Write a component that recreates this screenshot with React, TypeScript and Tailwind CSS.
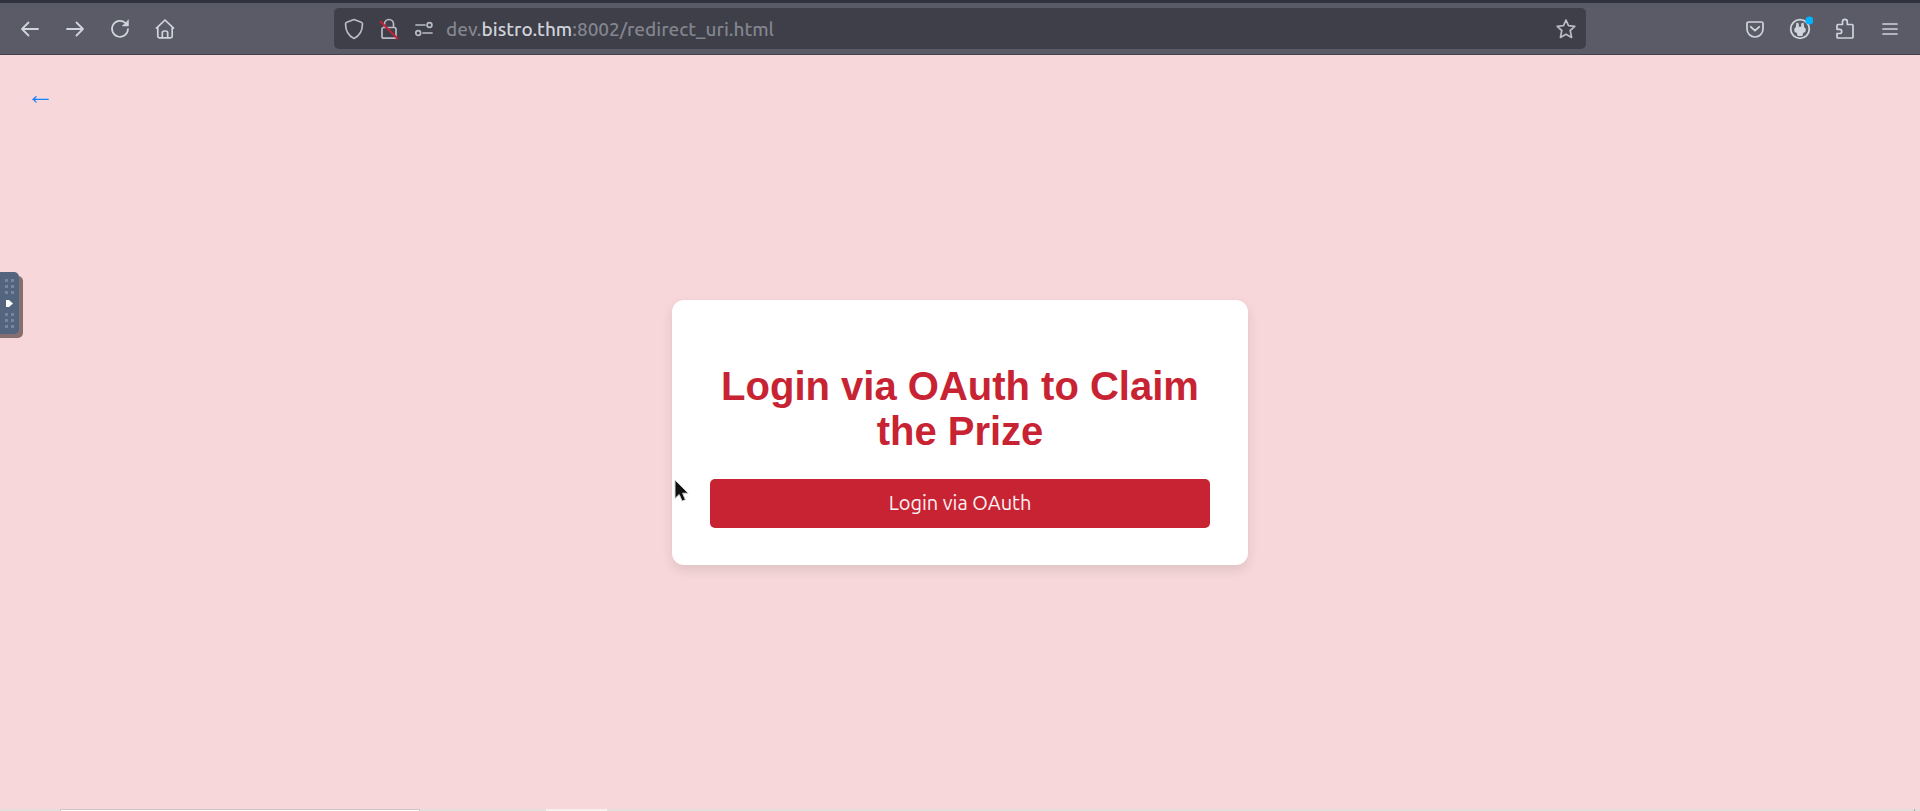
import React from "react";

const stroke = {
  fill: "none",
  stroke: "currentColor",
  strokeLinecap: "round" as const,
  strokeLinejoin: "round" as const,
};

function IconButton({ label, children }: { label: string; children: React.ReactNode }) {
  return (
    <button aria-label={label} className="flex size-7 items-center justify-center text-[#d0d4dc]">
      {children}
    </button>
  );
}

function Toolbar() {
  return (
    <header className="flex h-[55px] shrink-0 items-stretch border-t-[3px] border-b border-t-[#31323f] border-b-[#42434f] bg-[#5a5b66]">
      <nav className="flex flex-1 items-center gap-[17px] pl-4">
        <IconButton label="Back">
          <svg width="20" height="20" viewBox="0 0 20 20" {...stroke} strokeWidth="1.8">
            <path d="M18 10H2M8.500 3.500 2 10l6.500 6.500" />
          </svg>
        </IconButton>
        <IconButton label="Forward">
          <svg width="20" height="20" viewBox="0 0 20 20" {...stroke} strokeWidth="1.8">
            <path d="M2 10h16M11.500 3.500 18 10l-6.500 6.500" />
          </svg>
        </IconButton>
        <IconButton label="Reload">
          <svg width="20" height="20" viewBox="0 0 20 20" {...stroke} strokeWidth="1.7">
            <path d="M18 10A8 8 0 1 1 15.500 4" />
            <path d="M18.500 1v6h-6z" fill="currentColor" strokeWidth=".5" />
          </svg>
        </IconButton>
        <IconButton label="Home">
          <svg width="20" height="20" viewBox="0 0 20 20" {...stroke} strokeWidth="1.7">
            <path d="M1.500 9.200 10 1l8.500 8.200M2.800 8.500v8.700c0 1 .6 1.600 1.600 1.600h11.200c1 0 1.600-.6 1.600-1.600V8.500" />
            <path d="M7.300 18.500V14c0-1.200.8-2 2-2h1.400c1.200 0 2 .8 2 2v4.500" />
          </svg>
        </IconButton>
      </nav>

      <div className="my-[5px] flex w-[1252px] min-w-0 items-center rounded-[5px] bg-[#3e3f48] pr-[10px] pl-[10px] text-[#b9bcc6]">
        <svg className="shrink-0" width="20" height="22" viewBox="0 0 20 22" {...stroke} strokeWidth="1.700">
          <path d="M10 1.500 2.800 4.200c-1 .4-1.300.8-1.300 1.600C1.600 12 4.500 18 10 20.500 15.500 18 18.400 12 18.500 5.800c0-.8-.3-1.200-1.300-1.600z" />
        </svg>
        <svg className="ml-[15px] shrink-0" width="20" height="22" viewBox="0 0 20 22" {...stroke} strokeWidth="1.700">
          <path d="M5.500 9V6a4.500 4.500 0 0 1 9 0v3" />
          <rect x="3" y="9.500" width="14" height="10.700" rx="1.800" />
          <path d="M1.500 3.500 18.500 20.500" stroke="#c5213c" strokeWidth="2" />
        </svg>
        <svg className="ml-[15px] shrink-0" width="20" height="16" viewBox="0 0 20 16" {...stroke} strokeWidth="1.700">
          <path d="M2 4h9M9 12h9" />
          <circle cx="15.500" cy="4" r="2.400" />
          <circle cx="4.200" cy="12" r="2.400" />
        </svg>
        <div
          role="textbox"
          aria-label="Address"
          contentEditable
          suppressContentEditableWarning
          spellCheck={false}
          className="ml-3 min-w-0 flex-1 font-['Ubuntu','Noto_Sans',sans-serif] text-[19px] leading-7 font-medium whitespace-nowrap text-[#83858f]"
        >
          dev.<span className="text-[#d0d3db]">bistro.thm</span>:8002/redirect_uri.html
        </div>
        <button aria-label="Bookmark" className="shrink-0">
          <svg width="20" height="20" viewBox="0 0 20 20" {...stroke} strokeWidth="1.700">
            <path d="m10 1 2.500 5.600 6.300.7-4.600 4.200 1.400 6.900L10 15.200l-5.600 3.200 1.400-6.900-4.600-4.200 6.300-.7z" />
          </svg>
        </button>
      </div>

      <nav className="flex flex-1 items-center justify-end gap-[17px] pr-4">
        <IconButton label="Pocket">
          <svg width="18" height="18" viewBox="0 0 18 18" {...stroke} strokeWidth="1.700">
            <path d="M2.500 2h13c.8 0 1.500.7 1.500 1.500V9A8 8 0 0 1 1 9V3.500C1 2.700 1.700 2 2.500 2z" />
            <path d="m4.800 6.800 4.200 3.900 4.200-3.900" strokeWidth="1.800" />
          </svg>
        </IconButton>
        <IconButton label="Proxy switcher">
          <svg width="26" height="26" viewBox="0 0 26 26">
            <circle cx="13" cy="13" r="9.300" fill="none" stroke="currentColor" strokeWidth="1.800" />
            <path d="M9.400 6.600 11.800 7.600v3.200h2.400V7.600l2.400-1 .6 4.600 1.600 1.600-.3 3-2.500 1.400-.5 2.800h-5l-.5-2.800-2.500-1.400-.3-3 1.600-1.600z" fill="currentColor" />
            <circle cx="22.500" cy="4.500" r="4" fill="#00b3ff" />
          </svg>
        </IconButton>
        <IconButton label="Extensions">
          <svg width="20" height="22" viewBox="0 0 20 22" {...stroke} strokeWidth="1.700">
            <path d="M3 6.500h4.500V3.800a2.400 2.400 0 0 1 4.800 0v2.700h4.700c.6 0 1 .4 1 1V19c0 .6-.4 1-1 1H3c-.6 0-1-.4-1-1v-3.500h2.600a2.100 2.100 0 0 0 0-4.200H2V7.500c0-.6.4-1 1-1z" />
          </svg>
        </IconButton>
        <IconButton label="Menu">
          <svg width="18" height="14" viewBox="0 0 18 14" {...stroke} strokeWidth="1.700">
            <path d="M2 2h14M2 7h14M2 12h14" />
          </svg>
        </IconButton>
      </nav>
    </header>
  );
}

const gripRows = [0, 1, 2];

function GripDots() {
  return (
    <div className="grid grid-cols-2 gap-[3px]">
      {gripRows.map((row) => (
        <React.Fragment key={row}>
          <span className="size-[3px] bg-[#76859b]" />
          <span className="size-[3px] bg-[#76859b]" />
        </React.Fragment>
      ))}
    </div>
  );
}

function SideHandle() {
  return (
    <button
      aria-label="Open side panel"
      className="absolute top-[272px] -left-1 flex h-[62px] w-[23px] flex-col items-end justify-center gap-[6px] rounded-r-[5px] bg-[#53647f] pr-[5px] shadow-[4px_4px_0_#85706f]"
    >
      <GripDots />
      <svg width="9" height="7" viewBox="0 0 9 7" className="fill-white">
        <path d="M1 0h3l4 3.500L4 7H1z" />
      </svg>
      <GripDots />
    </button>
  );
}

function Pointer() {
  return (
    <svg className="absolute top-[178px] left-px" width="18" height="26" viewBox="0 0 18 26">
      <path d="M2 2v18.500l4.200-4 2.900 6.600 3.300-1.400-2.800-6.500h5.600z" fill="#111" stroke="#d3d3d3" strokeWidth="1" />
    </svg>
  );
}

export default function App() {
  return (
    <div className="relative flex min-h-screen flex-col overflow-hidden bg-[#f7d7da]">
      <Toolbar />
      <main className="flex flex-1 flex-col">
        <a
          href="#back"
          aria-label="Back to site"
          className="mt-[26px] ml-[26px] h-7 w-7 font-['Liberation_Sans',sans-serif] text-[28px] leading-7 text-[#1684fa]"
        >
          ←
        </a>
        <div className="flex flex-1 items-center justify-center pb-[54px]">
          <section className="relative w-[576px] rounded-xl bg-white px-[38px] pt-[64px] pb-[37px] text-center shadow-[0_5px_12px_rgba(0,0,0,0.1)]">
            <h1 className="font-['Liberation_Sans',sans-serif] text-[40px] leading-[45px] font-bold text-[#c82333]">
              Login via OAuth to Claim the Prize
            </h1>
            <button className="mt-[25px] h-[49px] w-full rounded-[5px] bg-[#c82333] font-['Ubuntu','Noto_Sans',sans-serif] text-[20px] text-[#fdf2f3]">
              Login via OAuth
            </button>
            <Pointer />
          </section>
        </div>
      </main>
      <SideHandle />
      <footer className="flex h-[2px] bg-[#e2dfdf]">
        <div className="ml-[60px] w-[360px] border-x border-t border-[#c8c8c8] bg-white" />
        <div className="ml-[126px] w-[61px] bg-[#f5f1f0]" />
        <div className="mr-[5px] ml-auto w-px bg-[#a9a9a9]" />
      </footer>
    </div>
  );
}
